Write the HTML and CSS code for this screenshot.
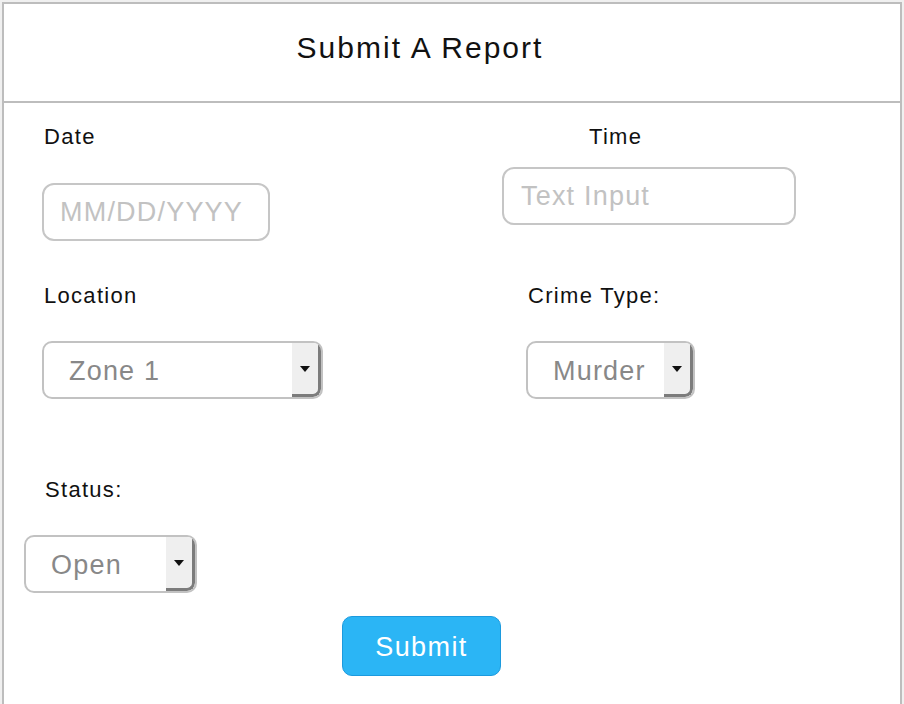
FILE: index.html
```html
<!DOCTYPE html>
<html lang="en">
<head>
<meta charset="utf-8">
<title>Submit A Report</title>
<link rel="stylesheet" href="styles.css">
</head>
<body>
<div class="frame">
  <header class="header">
    <h1 class="title">Submit A Report</h1>
  </header>
  <form class="form">
    <div class="row row-1">
      <div class="field field-date">
        <label class="label label-date">Date</label>
        <div class="input input-date"><span class="placeholder">MM/DD/YYYY</span></div>
      </div>
      <div class="field field-time">
        <label class="label label-time">Time</label>
        <div class="input input-time"><span class="placeholder">Text Input</span></div>
      </div>
    </div>
    <div class="row row-2">
      <div class="field field-location">
        <label class="label label-location">Location</label>
        <div class="select select-location">
          <span class="select-text">Zone 1</span>
          <span class="select-arrow"><span class="tri"></span></span>
        </div>
      </div>
      <div class="field field-crime">
        <label class="label label-crime">Crime Type:</label>
        <div class="select select-crime">
          <span class="select-text">Murder</span>
          <span class="select-arrow"><span class="tri"></span></span>
        </div>
      </div>
    </div>
    <div class="row row-3">
      <div class="field field-status">
        <label class="label label-status">Status:</label>
        <div class="select select-status">
          <span class="select-text">Open</span>
          <span class="select-arrow"><span class="tri"></span></span>
        </div>
      </div>
    </div>
    <div class="row row-4">
      <button type="button" class="submit">Submit</button>
    </div>
  </form>
</div>
</body>
</html>
```

FILE: styles.css
```css
* { box-sizing: border-box; }

html, body {
  margin: 0;
  padding: 0;
  background: #f0f0f0;
  font-family: "Liberation Sans", Arial, Helvetica, sans-serif;
  color: #111;
}

body { overflow: hidden; height: 704px; }

.frame {
  margin: 2px 2px 0 2px;
  height: 702px;
  border: 2px solid #bdbdbd;
  border-bottom: 0;
  background: #fff;
}

.header {
  height: 99px;
  border-bottom: 2px solid #bdbdbd;
  display: flex;
  align-items: center;
  justify-content: center;
  padding: 0 64px 9px 0;
}

.title {
  margin: 0;
  font-size: 30px;
  font-weight: normal;
  letter-spacing: 2px;
  line-height: 34px;
}

.form { display: block; }

.row { display: flex; align-items: flex-start; }

.field { display: flex; flex-direction: column; }

.label {
  font-size: 22px;
  line-height: 26px;
  letter-spacing: 1.3px;
  color: #111;
}

.row-1 { margin-top: 21px; padding-left: 38px; }
.field-date { width: 460px; }
.label-date { padding-left: 2px; }
.field-time .label-time { padding-left: 87px; }

.input {
  height: 58px;
  border: 2px solid #c6c6c6;
  border-radius: 12px;
  display: flex;
  align-items: center;
  background: #fff;
}
.placeholder {
  font-size: 27px;
  letter-spacing: 1.2px;
  color: #c2c2c2;
}
.input-date { width: 228px; margin-top: 33px; padding-left: 16px; }
.input-time { width: 294px; margin-top: 17px; padding-left: 17px; }

.row-2 { margin-top: 42px; padding-left: 38px; }
.field-location { width: 484px; }
.label-location, .label-crime { padding-left: 2px; }

.select {
  height: 58px;
  margin-top: 32px;
  border: 2px solid #c2c2c2;
  border-radius: 10px;
  display: flex;
  align-items: stretch;
  overflow: hidden;
  background: #fff;
}
.select-text {
  flex: 1;
  display: flex;
  align-items: center;
  padding: 2px 0 0 25px;
  font-size: 27px;
  letter-spacing: 1.2px;
  color: #888;
}
.select-arrow {
  width: 29px;
  background: #efefef;
  border-right: 3px solid #7c7c7c;
  border-bottom: 3px solid #7c7c7c;
  border-bottom-right-radius: 8px;
  display: flex;
  align-items: center;
  justify-content: center;
}
.tri {
  width: 0;
  height: 0;
  border-left: 5px solid transparent;
  border-right: 5px solid transparent;
  border-top: 6px solid #111;
  margin-top: 1px;
}

.select-location { width: 281px; }
.select-crime { width: 169px; }

.row-3 { margin-top: 78px; padding-left: 20px; }
.label-status { padding-left: 21px; }
.select-status { width: 173px; }

.row-4 { margin-top: 23px; padding-left: 338px; }
.submit {
  width: 159px;
  height: 60px;
  border: 1px solid #1c9ade;
  border-radius: 10px;
  background: #2bb5f5;
  color: #fff;
  font-family: "Liberation Sans", Arial, Helvetica, sans-serif;
  font-size: 27px;
  letter-spacing: 1.4px;
  padding: 3px 0 0 0;
}
```
